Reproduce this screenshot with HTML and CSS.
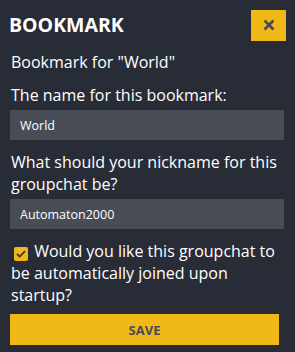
FILE: index.html
```html
<!DOCTYPE html>
<html>
<head>
<meta charset="utf-8">
<link rel="stylesheet" href="styles.css">
</head>
<body>
<div class="modal">
  <div class="header">
    <h1 class="title">BOOKMARK</h1>
    <button class="close" aria-label="Close">
      <svg width="12" height="12" viewBox="0 0 12 12"><path d="M1.5 1.5 L10.5 10.5 M10.5 1.5 L1.5 10.5" stroke="#464b55" stroke-width="2.6" stroke-linecap="butt"/></svg>
    </button>
  </div>
  <form class="form">
    <p class="intro">Bookmark for "World"</p>
    <label class="label">The name for this bookmark:</label>
    <input class="field" type="text" value="World">
    <label class="label">What should your nickname for this groupchat be?</label>
    <input class="field" type="text" value="Automaton2000">
    <label class="check-row">
      <span class="checkbox"><svg width="10" height="8" viewBox="0 0 10 8"><path d="M1 4 L3.8 6.6 L9 1.2" fill="none" stroke="#3d3a2a" stroke-width="1.8"/></svg></span>
      Would you like this groupchat to be automatically joined upon startup?
    </label>
    <button class="save" type="button">SAVE</button>
  </form>
</div>
</body>
</html>
```
FILE: styles.css
```css
html, body {
  margin: 0;
  padding: 0;
  background: #272c37;
}
body {
  font-family: "Open Sans", "Noto Sans", sans-serif;
  color: #ffffff;
  width: 295px;
  height: 352px;
}
.modal {
  padding: 9px 9px 0 10px;
}
.header {
  display: flex;
  justify-content: space-between;
  align-items: center;
}
.title {
  margin: 0 0 0 -1px;
  font-size: 19.5px;
  font-weight: 700;
  line-height: 32px;
}
.close {
  width: 35px;
  height: 31px;
  border: none;
  background: #f0b917;
  display: flex;
  align-items: center;
  justify-content: center;
  padding: 0;
}
.form {
  display: flex;
  flex-direction: column;
  font-size: 16px;
  line-height: 22px;
}
.intro {
  margin: 10px 0 0 1px;
}
.label {
  margin: 11px 0 0 1px;
}
.field {
  margin-top: 4px;
  height: 30px;
  box-sizing: border-box;
  width: 274px;
  border: none;
  background: #474c55;
  color: #ffffff;
  font-family: "Open Sans", "Noto Sans", sans-serif;
  font-size: 12.5px;
  padding: 0 10px;
  outline: none;
}
.check-row {
  margin: 11px 0 0 1px;
  display: block;
}
.checkbox {
  display: inline-flex;
  align-items: center;
  justify-content: center;
  width: 14px;
  height: 14px;
  border-radius: 2px;
  background: #f0b917;
  margin: 0 2px 0 3px;
  vertical-align: -1px;
}
.save {
  margin-top: 8px;
  width: 269px;
  height: 31px;
  border: none;
  background: #f0b917;
  color: #464b55;
  font-family: "Open Sans", "Noto Sans", sans-serif;
  font-weight: 700;
  font-size: 13px;
  padding: 0;
}
```
